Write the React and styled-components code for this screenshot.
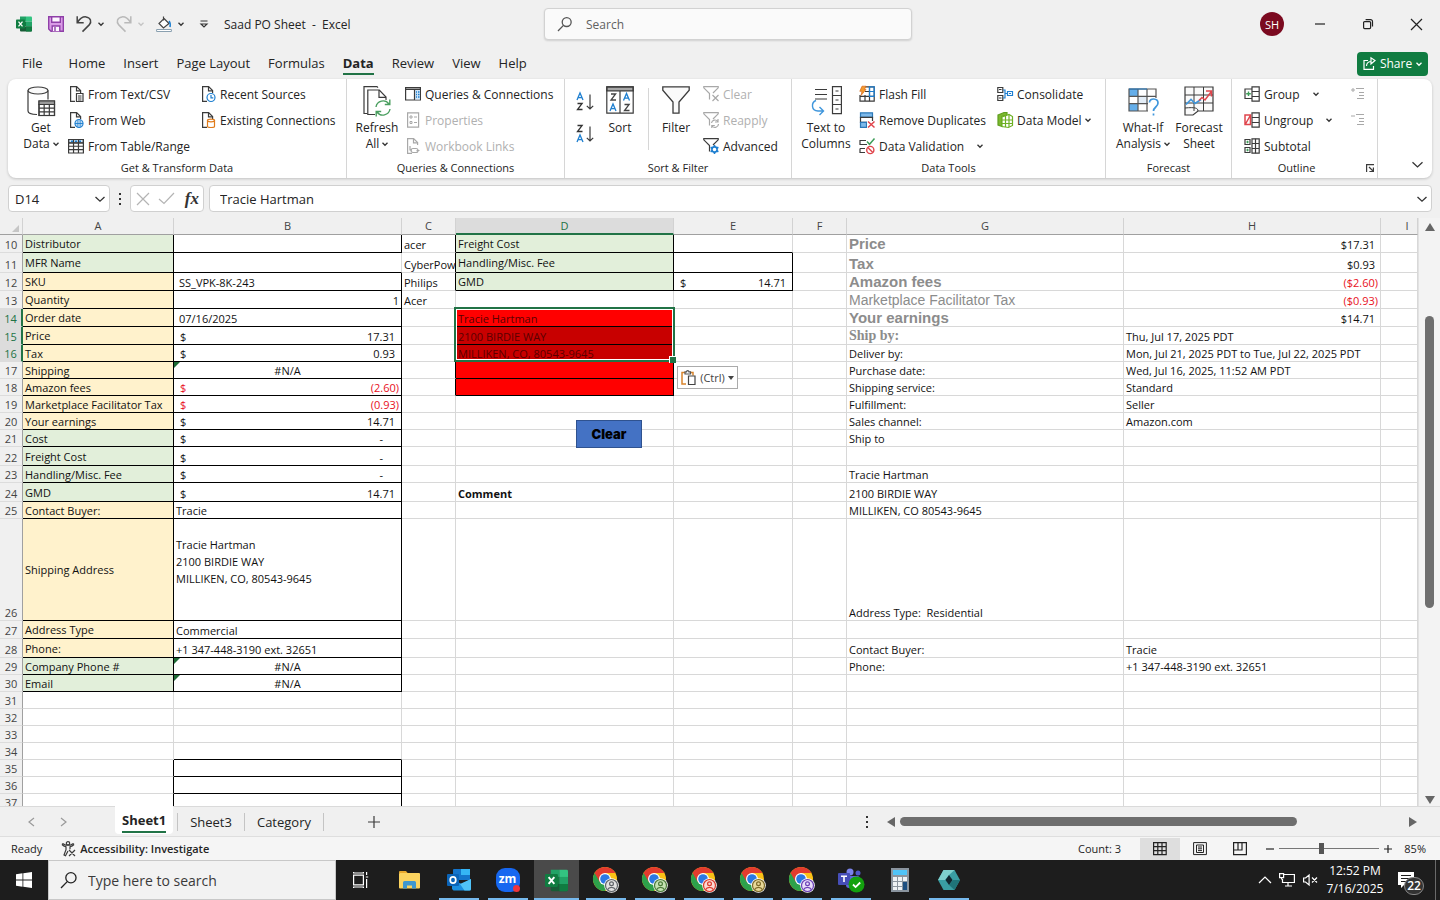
import React from 'react';
import styled, { createGlobalStyle, css } from 'styled-components';

const UI = '"Open Sans", "Noto Sans", sans-serif';
const GREEN = '#217346';

const GlobalStyle = createGlobalStyle`
  * { box-sizing: border-box; }
  html, body, #root { height: 100%; }
  body { margin: 0; background: #f0f0f0; font-family: ${UI}; color: #242424; overflow: hidden; }
  button, input { font-family: inherit; color: inherit; }
  button { border: 0; padding: 0; background: none; }
`;

const Window = styled.div`
  height: 100%;
  display: flex;
  flex-direction: column;
`;

const Svg = styled.svg`
  display: block;
  flex: none;
  overflow: visible;
`;

/* ---------- icons ---------- */

const Pic = ({ w = 16, h = 16, children, ...rest }) => (
  <Svg width={w} height={h} viewBox={`0 0 ${w} ${h}`} fill="none" stroke="#3b3b3b" strokeWidth="1.2" aria-hidden="true" {...rest}>
    {children}
  </Svg>
);

const Chevron = ({ color = '#333', size = 6, sw = 1.3 }) => (
  <Pic w={size} h={size} stroke={color} strokeWidth={sw}>
    <path d={`M0.5 ${size * 0.3} L${size / 2} ${size * 0.72} L${size - 0.5} ${size * 0.3}`} />
  </Pic>
);

const ExcelLogo = ({ s = 16 }) => (
  <Svg width={s} height={s} viewBox="0 0 32 32" aria-hidden="true">
    <path d="M8 1h12v10H8z" fill="#21a366" />
    <path d="M20 1h10a2 2 0 0 1 2 2v8H20z" fill="#33c481" />
    <path d="M8 11h12v10H8z" fill="#107c41" />
    <path d="M20 11h12v10H20z" fill="#21a366" />
    <path d="M8 21h24v8a2 2 0 0 1-2 2H10a2 2 0 0 1-2-2z" fill="#185c37" />
    <path d="M20 21h12v8a2 2 0 0 1-2 2H20z" fill="#107c41" />
    <rect x="0" y="7" width="18" height="18" rx="1.600" fill="#107c41" />
    <path d="M5 11.200l8 9.600M13 11.200l-8 9.600" stroke="#fff" strokeWidth="2.600" />
  </Svg>
);

const SaveIcon = () => (
  <Pic stroke="#8f3fa8" strokeWidth="1.4">
    <path d="M.7.7h14.6v14.6H3L.7 13z" fill="#d99be6" />
    <path d="M3.7.7h8.6v5.6H3.7zM4.2 15.3V10h7.6v5.3" fill="#fdf5ff" />
    <path d="M7 11v4" />
  </Pic>
);

const UndoIcon = () => (
  <Pic stroke="#444" strokeWidth="1.5">
    <path d="M1.200.2v6.500h6.500M1.400 6.500C4 2.500 7 .6 10 .9c4.800.6 6 5 3.200 8L6.500 15.600" />
  </Pic>
);

const RedoIcon = () => (
  <Pic stroke="#b9b9b9" strokeWidth="1.5">
    <path d="M14.800.2v6.500H8.300M14.600 6.500C12 2.500 9 .6 6 .9c-4.800.6-6 5-3.200 8l6.700 6.700" />
  </Pic>
);

const FillIcon = () => (
  <Pic>
    <path d="M7.500.5v4M8 2.500l5 5-5.500 4.500L3 7.500z" fill="#fff" stroke="#444" />
    <path d="M13 5c1 1 1.500 3 1 6" stroke="#1e7fd0" strokeWidth="1.600" />
    <path d="M.6 13.500h14.800v2H.6z" fill="#fff" stroke="#8aa0b0" strokeWidth="1" />
  </Pic>
);

const CustomizeIcon = () => (
  <Pic w={8} h={8} stroke="#333">
    <path d="M.5 1h7M1 4l3 3 3-3z" />
  </Pic>
);

const SearchIcon = ({ s = 16, color = '#555' }) => (
  <Pic w={s} h={s} stroke={color} strokeWidth="1.3">
    <circle cx={s * 0.62} cy={s * 0.36} r={s * 0.32} />
    <path d={`M${s * 0.39} ${s * 0.6} L0 ${s}`} />
  </Pic>
);

const Page = ({ stroke = '#3b3b3b' }) => (
  <>
    <path d="M7 15.400H2.600V.6h6l4 4v2.400" stroke={stroke} />
    <path d="M8.500.6v4.200h4.200" stroke={stroke} />
  </>
);

const MiniGrid = ({ x, y, w, h, cols, rows, color = '#3b3b3b' }) => {
  const lines = [];
  for (let c = 1; c < cols; c += 1) lines.push(`M${x + (w * c) / cols} ${y}v${h}`);
  for (let r = 1; r < rows; r += 1) lines.push(`M${x} ${y + (h * r) / rows}h${w}`);
  return <path d={`M${x} ${y}h${w}v${h}h${-w}z${lines.join('')}`} stroke={color} />;
};

const GetDataIcon = () => (
  <Pic w={28} h={30}>
    <ellipse cx="11" cy="4.500" rx="10" ry="3.500" fill="#fafafa" />
    <path d="M1 4.500v20.500c0 2 4 3.400 9 3.500M21 4.500v9" />
    <rect x="12" y="15" width="15.500" height="14.500" fill="#fff" />
    <path d="M12 15h15.500v3.500H12z" fill="#9a9a9a" />
    <MiniGrid x={12} y={18.5} w={15.5} h={11} cols={3} rows={3} />
  </Pic>
);

const TextCsvIcon = () => (
  <Pic>
    <Page />
    <path d="M8.500 7.500h6.500v8H8.500z" fill="#fff" />
    <path d="M10 10h3.500M10 12h3.500M10 14h3.500" strokeWidth="1" />
  </Pic>
);

const WebIcon = () => (
  <Pic>
    <Page />
    <circle cx="11" cy="11.500" r="4" fill="#fff" stroke="#1e7fd0" />
    <path d="M7 11.500h8M11 7.500v8M9.200 8v7M12.800 8v7" stroke="#1e7fd0" strokeWidth=".9" />
  </Pic>
);

const TableIcon = () => (
  <Pic>
    <path d="M.6 1.500h14.800v3.500H.6z" fill="#cfe5f8" />
    <MiniGrid x={0.6} y={1.5} w={14.8} h={13.5} cols={3} rows={4} />
    <path d="M3 3.200h2M7 3.200h2M11 3.200h2" stroke="#1e7fd0" strokeWidth="1.500" />
  </Pic>
);

const RecentIcon = () => (
  <Pic>
    <Page />
    <circle cx="11" cy="11.500" r="4" fill="#fff" stroke="#1e7fd0" />
    <path d="M11 9v2.800h2.300" stroke="#1e7fd0" />
  </Pic>
);

const ExistingIcon = () => (
  <Pic>
    <Page />
    <path d="M7.500 8.500v6c0 1.300 7 1.300 7 0v-6z" fill="#fff" stroke="#e07b1a" />
    <ellipse cx="11" cy="8.500" rx="3.500" ry="1.300" fill="#fff" stroke="#e07b1a" />
  </Pic>
);

const RefreshIcon = () => (
  <Pic w={28} h={30}>
    <path d="M4.500 27.500H1V.6h13l1 1" />
    <path d="M12 28.500H4.800V4h11.500L23 11v3" fill="#fff" />
    <path d="M16 4v7.300h7" />
    <circle cx="20" cy="22" r="8.500" fill="#fff" stroke="none" />
    <path d="M13 21a7.200 7.200 0 0 1 13-3M27 23a7.200 7.200 0 0 1-13 3M26.800 13.500v5h-5M13.200 30.500v-5h5" stroke="#4a9e5f" strokeWidth="1.400" />
  </Pic>
);

const QueriesIcon = () => (
  <Pic>
    <path d="M.6 1.500h14.800v12.500H.6z" fill="#fff" />
    <path d="M.6 1.500h14.800v2H.6z" fill="#999" />
    <path d="M10 4h5v9.500h-5z" fill="#cfe5f8" stroke="none" />
    <path d="M9.500 3.500v10.500" />
    <path d="M11 6h1M13 6h1.500M11 8.500h1M13 8.500h1.500M11 11h1M13 11h1.500" stroke="#1e7fd0" strokeWidth="1.300" />
  </Pic>
);

const PropertiesIcon = () => (
  <Pic stroke="#a8a8a8">
    <path d="M2.600.8h11v14.400h-11z" />
    <path d="M5 4h2v2H5zM5 9.500h2v2H5zM9 5h3M9 10.500h3" strokeWidth="1" />
  </Pic>
);

const LinksIcon = () => (
  <Pic stroke="#a8a8a8">
    <Page stroke="#a8a8a8" />
    <path d="M5 8v4h2M7.500 10.500h3.500a2 2 0 0 1 0 4H8a2 2 0 0 1 0-4M11.500 12.500h3" />
  </Pic>
);

const LetterA = ({ x, y, c }) => <path d={`M${x} ${y + 7}l3 -7l3 7M${x + 1} ${y + 4.6}h4`} stroke={c} strokeWidth="1.300" />;
const LetterZ = ({ x, y, c }) => <path d={`M${x + 0.5} ${y + 0.5}h4.600l-4.600 6h5`} stroke={c} strokeWidth="1.300" />;

const SortPairIcon = ({ desc }) => (
  <Pic w={17} h={18}>
    {desc ? <LetterZ x={0} y={0} c="#333" /> : <LetterA x={0} y={0} c="#1e7fd0" />}
    {desc ? <LetterA x={0} y={10} c="#1e7fd0" /> : <LetterZ x={0} y={10} c="#333" />}
    <path d="M13 1.500v14.500M9.800 12.800L13 16l3.200-3.200" />
  </Pic>
);

const SortIcon = () => (
  <Pic w={28} h={28}>
    <path d="M.8.8h26.400v4H.8z" fill="#a8a8a8" />
    <path d="M.8.8h26.400v26.400H.8zM14 5v22" />
    <LetterZ x={4.5} y={7.5} c="#444" />
    <LetterA x={17.5} y={7.5} c="#1e7fd0" />
    <LetterA x={4} y={18} c="#1e7fd0" />
    <LetterZ x={18} y={18} c="#444" />
  </Pic>
);

const FilterIcon = () => (
  <Pic w={28} h={28} strokeWidth="1.300">
    <path d="M.8.8h26.400v3.500L17 16v11.200h-6V16L.8 4.300z" fill="#fafafa" />
  </Pic>
);

const SmallFunnel = ({ color, children }) => (
  <Pic stroke={color}>
    <path d="M6.500 12V7.500L.8 1.800V.7h14.400v1.100L10 7M6.500 12v1.500" />
    {children}
  </Pic>
);

const ClearIcon = () => (
  <SmallFunnel color="#a8a8a8"><path d="M9.500 9l6 6M15.500 9l-6 6" /></SmallFunnel>
);
const ReapplyIcon = () => (
  <SmallFunnel color="#a8a8a8"><path d="M8.500 11a3.500 3.500 0 0 1 6.300-1.500M15.500 12a3.500 3.500 0 0 1-6.300 2M15 7v3h-3M8.800 16v-2.500h3" /></SmallFunnel>
);
const AdvancedIcon = () => (
  <SmallFunnel color="#3b3b3b">
    <circle cx="11.500" cy="11.500" r="2.600" stroke="#1e7fd0" strokeWidth="1.600" />
    <path d="M11.500 7v2M11.500 14v2M7.600 9.300l1.700 1M13.700 12.700l1.700 1M7.600 13.700l1.700-1M13.700 10.300l1.700-1" stroke="#1e7fd0" strokeWidth="1.600" />
  </SmallFunnel>
);

const TextColumnsIcon = () => (
  <Pic w={31} h={30}>
    <path d="M4 3.500h12M4 8.500h12M4 13h12" />
    <path d="M21.500.6h8.900v27h-8.900zM21.500 9.500h8.900M21.500 18.500h8.900M24.500 5h3M24.500 14h3M24.500 23h3" />
    <path d="M5 14.500c-5 2-5 10 2 10.500h5M8.500 21l4 4-4 4" stroke="#3f96dc" strokeWidth="1.400" />
  </Pic>
);

const FlashFillIcon = () => (
  <Pic>
    <path d="M6 .8h9.200v14.400H1V9" />
    <path d="M6 5.500h9M1 10.300h14M6 9v6M10.500.8v14.400" />
    <path d="M10.500.8h4.700v4.700h-4.700zM10.500 5.500h4.700v4.800h-4.700z" stroke="#1e7fd0" />
    <path d="M3 .2h4L5.500 3.500H7L2 9.500l1-4.200H.8z" fill="#f39a2d" stroke="#d8691a" strokeWidth=".7" />
  </Pic>
);

const RemoveDupIcon = () => (
  <Pic>
    <path d="M1.500.8h12v4.500h-12z" fill="#7db9ea" stroke="#2b78b8" />
    <path d="M1.500 5.300h12v5h-12z" />
    <path d="M1.500 10.300h6v5h-6z" fill="#7db9ea" stroke="#2b78b8" />
    <path d="M8 9h8v7H8z" fill="#fff" stroke="none" />
    <path d="M9 9.500l6.500 6M15.500 9.500l-6.500 6" stroke="#e0454c" strokeWidth="1.500" />
  </Pic>
);

const ValidationIcon = () => (
  <Pic>
    <path d="M7 2.500H1v4h7M1 10.500h5M1 10.500v4h5" />
    <path d="M8 3.500l2.500 2.800L15.500.5" stroke="#3f9e5a" strokeWidth="1.500" />
    <circle cx="11.300" cy="12" r="3.600" fill="#fff" stroke="#e0454c" strokeWidth="1.400" />
    <path d="M8.800 9.500l5 5" stroke="#e0454c" strokeWidth="1.400" />
  </Pic>
);

const ConsolidateIcon = () => (
  <Pic>
    <path d="M.8 1.500h5v5h-5zM.8 9.500h5v5h-5z" />
    <path d="M2 3.500h2.500M2 12h2.500" strokeWidth="1" />
    <path d="M10.500 5.500h5v4h-5z" stroke="#1e7fd0" />
    <path d="M6 4h2v8H6M8 7.500h2.500M12 7.500h2" stroke="#1e7fd0" />
  </Pic>
);

const DataModelIcon = () => (
  <Pic stroke="#5f9e1f">
    <path d="M1 3l6-2.500h3V3L5 4.500v10L1 13z" fill="#7cb82f" />
    <path d="M5 5l7-2.500 3.500 2v9l-4 2-6.500-1z" fill="#fff" stroke="#6eb024" />
    <path d="M8.500 4v11M12 3v12M5 8h10.500M5 11.500h10.500" stroke="#6eb024" />
  </Pic>
);

const WhatIfIcon = () => (
  <Pic w={31} h={30}>
    <path d="M1 3h9v7.500H1zM1 18h9v7H1z" fill="#64aeea" stroke="none" />
    <path d="M10 10.500h9V18h-9z" fill="#e3edf7" stroke="none" />
    <MiniGrid x={1} y={3} w={27} h={22} cols={3} rows={3} color="#555" />
    <path d="M1 3h18" stroke="#2b78b8" />
    <path d="M20 12h11v18H20z" fill="#fff" stroke="none" />
    <path d="M21.500 16.500c0-5 8.500-4.500 8.500.5 0 4-4.500 4-4.500 8M25.500 27.500v2" stroke="#3f96dc" strokeWidth="1.700" />
  </Pic>
);

const ForecastIcon = () => (
  <Pic w={30} h={30}>
    <path d="M1 1h28v24H14l-5 4H1z" fill="#fafafa" />
    <path d="M10 1v24M19.500 1v24M1 9h28M1 17h28M14 25c0-3-3-4-13-3" strokeWidth="1" />
    <path d="M2 18.500l5-5 4 4 6-4" stroke="#3f96dc" strokeWidth="1.700" />
    <path d="M15 14.500l3-3 3 2.500 6-8M22 5h5.500v5.500" stroke="#e0454c" strokeWidth="1.500" />
  </Pic>
);

const OutlineIcon = ({ kind }) => (
  <Pic>
    <path d="M8 .8h7.200v14.400H8zM8 5.500h7M8 10.500h7" />
    {kind === 'group' && <path d="M8 3H1v9.500h7" />}
    {kind === 'group' && <path d="M4.500 5.500v4.600M2.200 7.800h4.600" stroke="#3f9e5a" strokeWidth="1.400" />}
    {kind === 'ungroup' && <path d="M1 3h5.500v9.500H1zM1.500 12L6 4" stroke="#e0454c" strokeWidth="1.500" />}
    {kind === 'subtotal' && (
      <>
        <path d="M11.500.8v14.400M1 1.500h5v5H1zM1 9.500h5v5H1z" />
        <path d="M3.500 2.800v2.500M2.300 4h2.500M3.500 10.800v2.500M2.300 12h2.500" stroke="#3f9e5a" />
      </>
    )}
  </Pic>
);

const DetailIcon = ({ plus }) => (
  <Pic stroke="#a8a8a8">
    <path d={plus ? 'M3 2v4M1 4h4M6 2.500h8M9 6.500h5M9 9.500h5M7 12.500h7' : 'M1 4h4M6 2.500h8M9 6.500h5M9 9.500h5M7 12.500h7'} strokeWidth="1" />
  </Pic>
);

const ShareIcon = () => (
  <Pic w={13} h={13} stroke="#fff">
    <path d="M5 3.500H1v8.800h9.500V9M3.500 9c0-3 2-4.500 5-4.500M8 1.500v2.800M8 4.500V7l4-3.500L8 .8v1.500" />
  </Pic>
);

const PasteIcon = () => (
  <Pic w={16} h={17} stroke="#d8842c">
    <path d="M5 15H1V3.500h3M9 3.500h3v3" strokeWidth="1.500" />
    <path d="M4 5V2.800h1.500a1.200 1.200 0 0 1 2.400 0H9.500V5z" stroke="#555" fill="#fff" />
    <path d="M7.500 7h6.500v8.500H7.500z" stroke="#444" fill="#fff" />
  </Pic>
);

const AccessIcon = () => (
  <Pic>
    <circle cx="7" cy="2.300" r="1.700" />
    <path d="M1 3.500c2 2 3.500 2 4 2.200v3L3 14l1.500.8L7 10M13 3.500c-2 2-3.500 2-4 2.200v2.500M8 9l6 6M14 9l-6 6M1 3.500l1-.8 3 1.500h4l3-1.500 1 .8" />
  </Pic>
);

const DotsIcon = () => (
  <Pic w={3} h={12} fill="#333" stroke="none"><path d="M0 0h2v2H0zM0 5h2v2H0zM0 10h2v2H0z" /></Pic>
);

/* ---------- title bar ---------- */

const TitleBar = styled.header`
  height: 48px;
  flex: none;
  display: grid;
  grid-template-columns: 1fr 368px 1fr;
  align-items: center;
  padding-left: 16px;
`;

const QuickAccess = styled.div`
  display: flex;
  align-items: center;
  gap: 16px;
`;

const QuickPair = styled.button`
  display: flex;
  align-items: center;
  gap: 6px;
  margin-left: -4px;
`;

const DocTitle = styled.span`
  font-size: 12px;
  white-space: pre;
`;

const SearchBox = styled.label`
  height: 32px;
  display: flex;
  align-items: center;
  gap: 14px;
  padding: 0 13px;
  background: #fafafa;
  border: 1px solid #d2d2d2;
  border-radius: 4px;
  box-shadow: 0 1px 2px #0002;
`;

const PlainInput = styled.input`
  flex: 1;
  min-width: 0;
  border: 0;
  padding: 0;
  background: none;
  outline: 0;
  font-size: ${(p) => p.$size || 13}px;
  &::placeholder { color: ${(p) => p.$hint || '#616161'}; opacity: 1; }
`;

const WindowTools = styled.div`
  display: flex;
  justify-content: flex-end;
  align-items: center;
`;

const Avatar = styled.button`
  width: 24px;
  height: 24px;
  margin-right: 12px;
  border-radius: 50%;
  background: #7b0a20;
  color: #fff;
  font-size: 11px;
`;

const WindowButton = styled.button`
  width: 48px;
  height: 32px;
  display: grid;
  place-items: center;
`;

/* ---------- ribbon ---------- */

const TabBar = styled.nav`
  height: 31px;
  flex: none;
  display: flex;
  align-items: center;
  gap: 18px;
  padding: 0 12px 0 22px;
`;

const RibbonTab = styled.button`
  height: 22px;
  font-size: 13px;
  white-space: nowrap;
  border-bottom: 2px solid transparent;
  ${(p) => p.$wide && css`margin-right: 8px;`}
  ${(p) => p.$active && css`font-weight: 700; border-color: ${GREEN};`}
`;

const ShareButton = styled.button`
  margin-left: auto;
  height: 24px;
  width: 71px;
  display: flex;
  align-items: center;
  justify-content: center;
  gap: 4px;
  border-radius: 4px;
  background: #107c41;
  color: #fff;
  font-size: 12px;
`;

const Ribbon = styled.section`
  height: 99px;
  flex: none;
  margin: 0 8px;
  display: flex;
  background: #fff;
  border-radius: 8px;
  box-shadow: 0 1px 3px #0003;
  font-size: 12px;
`;

const Group = styled.div`
  width: ${(p) => p.$w}px;
  flex: none;
  display: flex;
  flex-direction: column;
  padding-top: 2px;
  border-right: 1px solid #d6d6d6;
  position: relative;
`;

const GroupBody = styled.div`
  height: 79px;
  display: flex;
  padding-left: ${(p) => p.$pad}px;
`;

const GroupLabel = styled.div`
  text-align: center;
  font-size: 11px;
  line-height: 16px;
  padding-right: ${(p) => (p.$launcher ? 16 : 0)}px;
`;

const Launcher = styled.button`
  position: absolute;
  right: 3px;
  bottom: 6px;
`;

const BigButton = styled.button`
  width: ${(p) => p.$w}px;
  flex: none;
  display: flex;
  flex-direction: column;
  align-items: center;
  gap: 3px;
  padding-top: 5px;
  font-size: 12px;
  line-height: 16px;
  white-space: nowrap;
`;

const IconSlot = styled.span`
  height: 31px;
`;

const WithChevron = styled.span`
  display: inline-flex;
  align-items: center;
  gap: 3px;
`;

const Column = styled.div`
  width: ${(p) => p.$w}px;
  flex: none;
  margin-left: ${(p) => p.$gap || 0}px;
`;

const SmallButton = styled.button`
  height: 26px;
  display: flex;
  align-items: center;
  gap: 4px;
  font-size: 12px;
  white-space: nowrap;
  color: ${(p) => (p.disabled ? '#b0b0b0' : '#242424')};
`;

const MenuMark = styled.span`
  margin-left: ${(p) => (p.$wide ? 9 : -1)}px;
`;

const SortStack = styled.div`
  display: flex;
  flex-direction: column;
  gap: 14px;
  padding-top: 12px;
  width: 22px;
`;

const InnerRule = styled.div`
  width: 1px;
  height: 62px;
  margin: 7px 0 0 7px;
  background: #d6d6d6;
`;

const Collapse = styled.button`
  margin: auto 9px 8px auto;
`;

/* ---------- formula bar ---------- */

const FormulaRow = styled.div`
  height: 40px;
  flex: none;
  display: flex;
  align-items: center;
  padding: 1px 8px 0;
`;

const Field = styled.div`
  height: 27px;
  display: flex;
  align-items: center;
  justify-content: space-between;
  width: ${(p) => (p.$w ? `${p.$w}px` : 'auto')};
  flex: ${(p) => (p.$w ? 'none' : '1')};
  margin-left: ${(p) => p.$ml || 0}px;
  padding: 0 4px 0 ${(p) => p.$pad || 4}px;
  background: #fff;
  border: 1px solid #d0d0d0;
  border-radius: 4px;
`;

const Grip = styled.span`
  width: 20px;
  display: grid;
  place-items: center;
`;

const Fx = styled.button`
  font: italic 700 17px/20px "Liberation Serif", serif;
  color: #333;
`;

/* ---------- sheet ---------- */

const SheetArea = styled.main`
  flex: 1;
  min-height: 0;
  display: flex;
`;

const GridPane = styled.div`
  flex: 1;
  min-width: 0;
  overflow: hidden;
`;

const Grid = styled.table`
  width: 100%;
  table-layout: fixed;
  border-spacing: 0;
  background: #fff;
  font: 11px/15px ${UI};
  color: #111;
`;

const ColHead = styled.th`
  height: 17px;
  padding: 0 0 0 ${(p) => (p.$last ? 16 : 0)}px;
  background: ${(p) => (p.$on ? '#dcdcdc' : '#f0f0f0')};
  color: ${(p) => (p.$on ? GREEN : '#444')};
  font-weight: 400;
  line-height: 14px;
  border-right: 1px solid #d2d2d2;
  border-bottom: ${(p) => (p.$on ? `2px solid ${GREEN}` : '1px solid #a0a0a0')};
`;

const Corner = styled.div`
  width: 0;
  margin: 5px 0 0 12px;
  border: solid transparent;
  border-width: 0 0 7px 7px;
  border-bottom-color: #c6c6c6;
`;

const RowHead = styled.th`
  padding: 0;
  background: ${(p) => (p.$on ? '#dcdcdc' : '#f0f0f0')};
  color: ${(p) => (p.$on ? GREEN : '#444')};
  font-weight: 400;
  line-height: 14px;
  vertical-align: bottom;
  border-right: ${(p) => (p.$on ? `2px solid ${GREEN}` : '1px solid #a0a0a0')};
  border-bottom: 1px solid #dcdcdc;
`;

const fills = { green: '#e2efda', yellow: '#fff2cc', red: '#ff0000', dark: '#c80000' };

const headings = {
  bold: css`font: 700 15px/16px "Liberation Sans", Arial, sans-serif;`,
  plain: css`font: 400 14px/16px "Liberation Sans", Arial, sans-serif;`,
  serif: css`font: 700 14px/16px "Liberation Serif", serif;`,
};

const Cell = styled.td`
  height: ${(p) => p.$h}px;
  padding: 0 2px;
  position: relative;
  white-space: pre;
  overflow: ${(p) => (p.$spill ? 'visible' : 'hidden')};
  vertical-align: ${(p) => p.$v || 'bottom'};
  text-align: ${(p) => p.$align || 'left'};
  background: ${(p) => fills[p.$fill] || '#fff'};
  color: ${(p) => p.$color || '#111'};
  font-weight: ${(p) => (p.$bold ? 700 : 400)};
  border-right: 1px solid ${(p) => (p.$r ? '#000' : '#d8d8d8')};
  border-bottom: 1px solid ${(p) => (p.$b ? '#000' : '#d8d8d8')};
  ${(p) => p.$indent && css`padding-left: 5px;`}
  ${(p) => p.$numeric && css`padding-right: 5px;`}
  ${(p) => p.$heading && css`
    ${headings[p.$heading]}
    color: #8c8c8c;
    vertical-align: bottom;
  `}
`;

const Accounting = styled.div`
  display: flex;
  justify-content: space-between;
  padding: 0 ${(p) => (p.$neg ? 0 : 4)}px 0 4px;
  color: ${(p) => (p.$neg ? '#e8101c' : 'inherit')};
`;

const Dash = styled.span`
  padding-right: 12px;
`;

const ErrorMark = styled.i`
  position: absolute;
  top: 0;
  left: 0;
  border: 0 solid transparent;
  border-width: 6px 6px 0 0;
  border-top-color: #1d6b35;
`;

const Address = styled.div`
  line-height: 17px;
`;

const Selection = styled.div`
  position: absolute;
  z-index: 2;
  top: -2px;
  left: -2px;
  right: -2px;
  height: 55px;
  border: 2px solid ${GREEN};
  box-shadow: inset 0 0 0 1px #fff;
  pointer-events: none;
  &::after {
    content: '';
    position: absolute;
    right: -3px;
    bottom: -3px;
    width: 6px;
    height: 6px;
    background: ${GREEN};
    border: solid #fff;
    border-width: 1px 0 0 1px;
  }
`;

const ClearShape = styled.button`
  position: absolute;
  z-index: 2;
  top: 7px;
  right: 31px;
  width: 66px;
  height: 28px;
  background: #4472c4;
  border: 1px solid #2f528f;
  color: #000;
  font-family: Inter, "Liberation Sans", sans-serif;
  font-weight: 900;
  font-size: 13px;
`;

const PasteOptions = styled.button`
  position: absolute;
  z-index: 2;
  top: 4px;
  left: 3px;
  width: 61px;
  height: 23px;
  display: flex;
  align-items: center;
  justify-content: center;
  gap: 3px;
  background: #fff;
  border: 1px solid #ababab;
  color: #444;
  font-size: 11px;
`;

const Triangle = styled.span`
  border: ${(p) => p.$s || 5}px solid transparent;
  ${(p) => p.$dir === 'up' && css`border-top: 0; border-bottom: ${p.$len || 8}px solid ${p.$c || '#666'};`}
  ${(p) => p.$dir === 'down' && css`border-bottom: 0; border-top: ${p.$len || 8}px solid ${p.$c || '#666'};`}
  ${(p) => p.$dir === 'left' && css`border-left: 0; border-right: ${p.$len || 8}px solid ${p.$c || '#666'};`}
  ${(p) => p.$dir === 'right' && css`border-right: 0; border-left: ${p.$len || 8}px solid ${p.$c || '#666'};`}
`;

const VScroll = styled.div`
  width: 22px;
  flex: none;
  display: flex;
  flex-direction: column;
  align-items: center;
  padding: 5px 0 2px;
  background: #f3f3f3;
  border-left: 1px solid #e2e2e2;
`;

const VTrack = styled.div`
  flex: 1;
  display: grid;
  grid-template-rows: 85fr 291fr 187fr;
`;

const VThumb = styled.div`
  grid-row: 2;
  width: 9px;
  border-radius: 5px;
  background: #6e6e6e;
`;

/* ---------- sheet tabs and status ---------- */

const SheetBar = styled.div`
  height: 31px;
  flex: none;
  display: flex;
  align-items: center;
  border-top: 1px solid #dadada;
  border-bottom: 1px solid #dedede;
`;

const SheetNav = styled.div`
  width: 115px;
  display: flex;
  gap: 25px;
  padding-left: 27px;
`;

const SheetTab = styled.button`
  height: 20px;
  margin: 0 12px;
  font-size: 13px;
  line-height: 18px;
`;

const ActiveTab = styled.div`
  align-self: flex-start;
  height: 28px;
  margin-top: -1px;
  padding: 2px 7px 0;
  background: #fff;
  border-radius: 0 0 4px 4px;
  button {
    height: 23px;
    font-size: 13px;
    line-height: 18px;
    font-weight: 700;
    border-bottom: 2px solid ${GREEN};
  }
`;

const TabRule = styled.i`
  width: 1px;
  height: 18px;
  background: #c4c4c4;
  margin-left: ${(p) => p.$ml || 0}px;
`;

const AddSheet = styled.button`
  margin-left: 44px;
`;

const HScroll = styled.div`
  width: 530px;
  margin: 0 23px 0 18px;
  display: flex;
  align-items: center;
  gap: 5px;
`;

const HTrack = styled.div`
  flex: 1;
  display: grid;
  grid-template-columns: 397fr 107fr;
`;

const HThumb = styled.div`
  height: 9px;
  border-radius: 5px;
  background: #6e6e6e;
`;

const StatusBar = styled.footer`
  height: 23px;
  flex: none;
  display: flex;
  align-items: center;
  padding: 0 14px 0 11px;
  background: #f5f5f5;
  font-size: 11px;
`;

const AccessButton = styled.button`
  display: flex;
  align-items: center;
  gap: 3px;
  margin-left: 19px;
  font-size: 11px;
  font-weight: 600;
`;

const CountText = styled.span`
  margin-right: 19px;
`;

const ViewButton = styled.button`
  width: 40px;
  height: 22px;
  display: grid;
  place-items: center;
  background: ${(p) => (p.$on ? '#dedede' : 'none')};
`;

const ZoomStep = styled.button`
  margin-left: ${(p) => p.$ml || 0}px;
`;

const ZoomRange = styled.input`
  width: 100px;
  height: 16px;
  margin: 0 5px;
  appearance: none;
  background: linear-gradient(#777, #777) center / 100% 1px no-repeat;
  &::-webkit-slider-thumb {
    appearance: none;
    width: 5px;
    height: 11px;
    background: #555;
  }
`;

const ZoomValue = styled.span`
  width: 26px;
  margin-left: 8px;
  text-align: right;
`;

const Spacer = styled.span`
  flex: 1;
`;

/* ---------- taskbar ---------- */

const Taskbar = styled.div`
  height: 40px;
  flex: none;
  display: flex;
  background: #1d1d1d;
  color: #fff;
`;

const StartButton = styled.button`
  width: 48px;
  display: grid;
  place-items: center;
`;

const TaskSearch = styled.label`
  width: 288px;
  display: flex;
  align-items: center;
  gap: 11px;
  padding: 0 12px;
  background: #f2f2f2;
  border: 1px solid #c8c8c8;
  color: #222;
`;

const TaskItem = styled.button`
  width: 49px;
  display: grid;
  place-items: center;
  ${(p) => p.$open && css`
    background: linear-gradient(#76b9ed, #76b9ed) center bottom / 40px 2px no-repeat;
  `}
  ${(p) => p.$active && css`
    background:
      linear-gradient(#76b9ed, #76b9ed) center bottom / 45px 2px no-repeat,
      linear-gradient(#4a4a4a, #4a4a4a) center / 45px 100% no-repeat;
  `}
`;

const Tray = styled.div`
  margin-left: auto;
  display: flex;
  align-items: center;
  gap: 8px;
  padding-right: 11px;
`;

const ShowDesktop = styled.button`
  width: 5px;
  border-left: 1px solid #6a6a6a;
`;

const Clock = styled.div`
  width: 58px;
  text-align: center;
  font-size: 12px;
  line-height: 18px;
`;

const Notify = styled.button`
  position: relative;
  width: 26px;
  height: 26px;
  margin-left: 6px;
`;

const Badge = styled.span`
  position: absolute;
  left: 6px;
  top: 10px;
  width: 20px;
  height: 18px;
  border-radius: 9px;
  border: 1px solid #888;
  background: #333;
  color: #fff;
  font-size: 12px;
  font-weight: 600;
  line-height: 16px;
`;

const WindowsLogo = () => (
  <Svg width="16" height="16" viewBox="0 0 16 16" fill="#fff" aria-hidden="true">
    <path d="M0 2.200l6.500-.9v6.300H0zM7.300 1.200L16 0v7.600H7.300zM0 8.400h6.500v6.300L0 13.800zM7.300 8.400H16V16l-8.700-1.200z" />
  </Svg>
);

const TaskViewIcon = () => (
  <Pic stroke="#fff">
    <path d="M.6 3.200h9.800v9.600H.6zM.6 0v1h9.800V0M.6 16v-1h9.800v1M13.600 0v3M13.600 7v9M12.800 5h2.400" />
  </Pic>
);

const ExplorerIcon = () => (
  <Svg width="22" height="18" viewBox="0 0 22 18" aria-hidden="true">
    <path d="M0 1a1 1 0 0 1 1-1h6l2 2.500H0z" fill="#e8a82c" />
    <rect y="2" width="21" height="15.500" rx="1" fill="#fbd35f" />
    <path d="M4 17.500v-6a1.500 1.500 0 0 1 1.500-1.500h10a1.500 1.500 0 0 1 1.500 1.500v6h-4v-3H8v3z" fill="#3f97cf" />
  </Svg>
);

const OutlookIcon = () => (
  <Svg width="24" height="22" viewBox="0 0 24 22" aria-hidden="true">
    <path d="M7 0h15a1 1 0 0 1 1 1v10H6V1a1 1 0 0 1 1-1z" fill="#1475cc" />
    <path d="M14 0h9v6h-9z" fill="#35b5f5" />
    <path d="M5 10l9.500 5L24 10v10a1.500 1.500 0 0 1-1.500 1.500H6.500L5 20z" fill="#1a8fe0" />
    <path d="M24 10v10a1.500 1.500 0 0 1-1.500 1.500h-5L13 15z" fill="#50c3f7" />
    <rect x="0" y="5" width="12" height="12" rx="1" fill="#0a64b8" />
    <ellipse cx="6" cy="11" rx="2.800" ry="3.100" fill="none" stroke="#fff" strokeWidth="1.700" />
  </Svg>
);

const ZoomLogo = styled.span`
  position: relative;
  width: 24px;
  height: 24px;
  border-radius: 9px;
  background: #1767f0;
  font-size: 12px;
  font-weight: 700;
  line-height: 21px;
  text-align: center;
  &::after {
    content: '';
    position: absolute;
    right: 0;
    bottom: 0;
    width: 7px;
    height: 7px;
    border-radius: 50%;
    background: #f0363d;
  }
`;

const ChromeIcon = ({ badge }) => (
  <Svg width="26" height="26" viewBox="0 0 26 26" aria-hidden="true">
    <circle cx="12" cy="12" r="12" fill="#fbc116" />
    <path d="M12 12L1.600 6A12 12 0 0 0 12 24l5.200-9z" fill="#2da14b" />
    <path d="M12 6h10.400A12 12 0 0 0 1.600 6l5.200 9z" fill="#e33b2e" />
    <circle cx="12" cy="12" r="6" fill="#fff" />
    <circle cx="12" cy="12" r="4.800" fill="#2b78e4" />
    <circle cx="18.500" cy="18.500" r="7.300" fill="#fff" />
    <circle cx="18.500" cy="18.500" r="6" fill={badge.fill} stroke={badge.ink} strokeWidth="1.200" />
    <circle cx="18.500" cy="16.800" r="1.900" fill="none" stroke={badge.ink} strokeWidth="1.200" />
    <path d="M14.800 22.500c1-2.800 6.400-2.800 7.400 0" fill="none" stroke={badge.ink} strokeWidth="1.200" />
  </Svg>
);

const TeamsIcon = () => (
  <Svg width="26" height="26" viewBox="0 0 26 26" aria-hidden="true">
    <circle cx="12" cy="5" r="3.500" fill="#7b83eb" />
    <circle cx="20" cy="6" r="2.500" fill="#5059c9" />
    <rect x="8" y="9" width="14" height="12" rx="3" fill="#5f68d8" />
    <rect x="0" y="6" width="12" height="12" rx="1" fill="#464eb8" />
    <path d="M3 9.300h6M6 9.300V15" stroke="#fff" strokeWidth="1.600" />
    <circle cx="18.500" cy="17.500" r="8" fill="#13a10e" />
    <path d="M15 17.500l2.600 2.600 4.600-4.600" fill="none" stroke="#fff" strokeWidth="1.800" />
  </Svg>
);

const CalcIcon = () => (
  <Svg width="18" height="24" viewBox="0 0 18 24" aria-hidden="true">
    <rect width="18" height="24" fill="#8a949e" />
    <rect x="2" y="2" width="14" height="5" fill="#4fc3f7" />
    <path d="M2 9h4v4H2zM7 9h4v4H7zM12 9h4v4h-4zM2 14h4v4H2zM7 14h4v4H7zM2 19h4v3H2zM7 19h4v3H7z" fill="#eef2f5" />
    <path d="M12 14h4v8h-4z" fill="#1c4e80" />
  </Svg>
);

const HexIcon = () => (
  <Svg width="22" height="20" viewBox="0 0 22 20" aria-hidden="true">
    <path d="M5.500 0h11L22 10l-5.500 10h-11L0 10z" fill="#3a9ea3" />
    <path d="M5.500 0h11L11 5l-4 5H0z" fill="#7fd0cd" />
    <path d="M16.500 20L22 10h-7l-4 5z" fill="#1f7479" />
    <path d="M11 5l3.500 5-3.500 5-3.500-5z" fill="#12262e" />
  </Svg>
);

/* ---------- data ---------- */

const ribbonTabs = ['File', 'Home', 'Insert', 'Page Layout', 'Formulas', 'Data', 'Review', 'View', 'Help'];

const columns = [
  ['A', 151], ['B', 228], ['C', 54], ['D', 218], ['E', 119], ['F', 54], ['G', 277], ['H', 257], ['I', null],
];

const na = { error: true };
const money = (value) => ({ money: value });

const rows = [
  { n: 10, h: 18, a: 'Distributor', tone: 'green', b: '', c: 'acer', d: 'Freight Cost', g: 'Price', head: 'bold', hv: '$17.31' },
  { n: 11, h: 20, a: 'MFR Name', tone: 'green', b: '', c: 'CyberPow', d: 'Handling/Misc. Fee', g: 'Tax', head: 'bold', hv: '$0.93' },
  { n: 12, h: 18, a: 'SKU', tone: 'yellow', b: 'SS_VPK-8K-243', indent: true, c: 'Philips', d: 'GMD', e: money('14.71'), g: 'Amazon fees', head: 'bold', hv: '($2.60)' },
  { n: 13, h: 18, a: 'Quantity', tone: 'yellow', b: '1', alignB: 'right', c: 'Acer', g: 'Marketplace Facilitator Tax', head: 'plain', hv: '($0.93)' },
  { n: 14, h: 18, a: 'Order date', tone: 'yellow', b: '07/16/2025', indent: true, d: 'Tracie Hartman', g: 'Your earnings', head: 'bold', hv: '$14.71' },
  { n: 15, h: 18, a: 'Price', tone: 'yellow', b: money('17.31'), d: '2100 BIRDIE WAY', g: 'Ship by:', head: 'serif', hl: 'Thu, Jul 17, 2025 PDT' },
  { n: 16, h: 17, a: 'Tax', tone: 'yellow', b: money('0.93'), d: 'MILLIKEN, CO, 80543-9645', g: 'Deliver by:', hl: 'Mon, Jul 21, 2025 PDT to Tue, Jul 22, 2025 PDT' },
  { n: 17, h: 17, a: 'Shipping', tone: 'yellow', b: na, g: 'Purchase date:', hl: 'Wed, Jul 16, 2025, 11:52 AM PDT' },
  { n: 18, h: 17, a: 'Amazon fees', tone: 'yellow', b: money('(2.60)'), g: 'Shipping service:', hl: 'Standard' },
  { n: 19, h: 17, a: 'Marketplace Facilitator Tax', tone: 'yellow', b: money('(0.93)'), g: 'Fulfillment:', hl: 'Seller' },
  { n: 20, h: 17, a: 'Your earnings', tone: 'yellow', b: money('14.71'), g: 'Sales channel:', hl: 'Amazon.com' },
  { n: 21, h: 17, a: 'Cost', tone: 'green', b: money('-'), g: 'Ship to' },
  { n: 22, h: 19, a: 'Freight Cost', tone: 'green', b: money('-') },
  { n: 23, h: 17, a: 'Handling/Misc. Fee', tone: 'green', b: money('-'), g: 'Tracie Hartman' },
  { n: 24, h: 19, a: 'GMD', tone: 'green', b: money('14.71'), d: 'Comment', g: '2100 BIRDIE WAY' },
  { n: 25, h: 17, a: 'Contact Buyer:', tone: 'yellow', b: 'Tracie', g: 'MILLIKEN, CO 80543-9645' },
  { n: 26, h: 102, a: 'Shipping Address', tone: 'yellow', address: true, b: 'Tracie Hartman\n2100 BIRDIE WAY\nMILLIKEN, CO, 80543-9645\n ', g: 'Address Type:  Residential' },
  { n: 27, h: 18, a: 'Address Type', tone: 'yellow', b: 'Commercial' },
  { n: 28, h: 19, a: 'Phone:', tone: 'yellow', b: '+1 347-448-3190 ext. 32651', g: 'Contact Buyer:', hl: 'Tracie' },
  { n: 29, h: 17, a: 'Company Phone #', tone: 'green', b: na, g: 'Phone:', hl: '+1 347-448-3190 ext. 32651' },
  { n: 30, h: 17, a: 'Email', tone: 'green', b: na },
  { n: 31, h: 17 }, { n: 32, h: 17 }, { n: 33, h: 17 }, { n: 34, h: 17 },
  { n: 35, h: 17, boxed: true }, { n: 36, h: 17, boxed: true }, { n: 37, h: 17, boxed: true },
];

const Value = ({ v, address }) => {
  if (v == null) return null;
  if (v.error) return <><ErrorMark />#N/A</>;
  if (v.money) {
    return (
      <Accounting $neg={v.money.startsWith('(')}>
        <span>$</span>
        {v.money === '-' ? <Dash>-</Dash> : <span>{v.money}</span>}
      </Accounting>
    );
  }
  return address ? <Address>{v}</Address> : v;
};

const redFill = (n) => {
  if (n === 15 || n === 16) return 'dark';
  return n >= 14 && n <= 18 ? 'red' : undefined;
};

const SheetRow = ({ row }) => {
  const { n, h } = row;
  const labelled = n <= 30;
  const selected = n >= 14 && n <= 16;
  const dFill = n <= 12 ? 'green' : redFill(n);
  const outlined = labelled || row.boxed;
  return (
    <tr>
      <RowHead scope="row" $on={selected}>{n}</RowHead>
      <Cell $h={h} $v="middle" $fill={row.tone} $r={outlined} $b={labelled}>{row.a}</Cell>
      <Cell
        $h={h}
        $r={outlined && n !== 11}
        $b={outlined || n === 34}
        $indent={row.indent}
        $align={row.b && row.b.error ? 'center' : row.alignB}
        $v={row.address ? 'middle' : 'bottom'}
      >
        <Value v={row.b} address={row.address} />
      </Cell>
      <Cell $h={h} $r={n <= 12 || redFill(n)} $spill={n === 11}>{row.c}</Cell>
      <Cell
        $h={h}
        $fill={dFill}
        $r={dFill}
        $b={dFill}
        $v={n <= 12 ? 'middle' : 'bottom'}
        $spill={n === 14 || n === 20}
        $bold={n === 24}
        $color={redFill(n) && '#5a0000'}
      >
        {row.d}
        {n === 14 && <Selection />}
        {n === 20 && <ClearShape type="button">Clear</ClearShape>}
      </Cell>
      <Cell $h={h} $r={n === 11 || n === 12} $b={n <= 12} $spill={n === 17}>
        <Value v={row.e} />
        {n === 17 && (
          <PasteOptions type="button">
            <PasteIcon />(Ctrl)<Triangle $dir="down" $s={3} $len={4} $c="#444" />
          </PasteOptions>
        )}
      </Cell>
      <Cell $h={h} />
      <Cell $h={h} $heading={row.head}>{row.g}</Cell>
      <Cell
        $h={h}
        $align={row.hv ? 'right' : 'left'}
        $numeric={row.hv && !row.hv.startsWith('(')}
        $color={row.hv && row.hv.startsWith('(') ? '#e8101c' : undefined}
      >
        {row.hv || row.hl}
      </Cell>
      <Cell $h={h} />
    </tr>
  );
};

const Small = ({ icon, children, menu, wide, disabled }) => (
  <SmallButton type="button" disabled={disabled}>
    {icon}
    <span>{children}</span>
    {menu && <MenuMark $wide={wide}><Chevron /></MenuMark>}
  </SmallButton>
);

const Big = ({ icon, lines, menu, w }) => (
  <BigButton type="button" $w={w}>
    <IconSlot>{icon}</IconSlot>
    <span>
      {lines[0]}
      {lines[1] && <br />}
      {lines[1] && <WithChevron>{lines[1]}{menu && <Chevron />}</WithChevron>}
    </span>
  </BigButton>
);

const DataRibbon = () => (
  <Ribbon aria-label="Data">
    <Group $w={339}>
      <GroupBody $pad={9}>
        <Big w={48} icon={<GetDataIcon />} lines={['Get', 'Data']} menu />
        <Column $w={132} $gap={3}>
          <Small icon={<TextCsvIcon />}>From Text/CSV</Small>
          <Small icon={<WebIcon />}>From Web</Small>
          <Small icon={<TableIcon />}>From Table/Range</Small>
        </Column>
        <Column $w={140}>
          <Small icon={<RecentIcon />}>Recent Sources</Small>
          <Small icon={<ExistingIcon />}>Existing Connections</Small>
        </Column>
      </GroupBody>
      <GroupLabel>Get &amp; Transform Data</GroupLabel>
    </Group>
    <Group $w={218}>
      <GroupBody $pad={6}>
        <Big w={48} icon={<RefreshIcon />} lines={['Refresh', 'All']} menu />
        <Column $w={150} $gap={4}>
          <Small icon={<QueriesIcon />}>Queries &amp; Connections</Small>
          <Small icon={<PropertiesIcon />} disabled>Properties</Small>
          <Small icon={<LinksIcon />} disabled>Workbook Links</Small>
        </Column>
      </GroupBody>
      <GroupLabel>Queries &amp; Connections</GroupLabel>
    </Group>
    <Group $w={227}>
      <GroupBody $pad={12}>
        <SortStack>
          <button type="button" aria-label="Sort A to Z"><SortPairIcon /></button>
          <button type="button" aria-label="Sort Z to A"><SortPairIcon desc /></button>
        </SortStack>
        <Big w={42} icon={<SortIcon />} lines={['Sort']} />
        <InnerRule />
        <Big w={54} icon={<FilterIcon />} lines={['Filter']} />
        <Column $w={85}>
          <Small icon={<ClearIcon />} disabled>Clear</Small>
          <Small icon={<ReapplyIcon />} disabled>Reapply</Small>
          <Small icon={<AdvancedIcon />}>Advanced</Small>
        </Column>
      </GroupBody>
      <GroupLabel>Sort &amp; Filter</GroupLabel>
    </Group>
    <Group $w={314}>
      <GroupBody $pad={6}>
        <Big w={56} icon={<TextColumnsIcon />} lines={['Text to', 'Columns']} />
        <Column $w={138} $gap={5}>
          <Small icon={<FlashFillIcon />}>Flash Fill</Small>
          <Small icon={<RemoveDupIcon />}>Remove Duplicates</Small>
          <Small icon={<ValidationIcon />} menu wide>Data Validation</Small>
        </Column>
        <Column $w={100}>
          <Small icon={<ConsolidateIcon />}>Consolidate</Small>
          <Small icon={<DataModelIcon />} menu>Data Model</Small>
        </Column>
      </GroupBody>
      <GroupLabel>Data Tools</GroupLabel>
    </Group>
    <Group $w={126}>
      <GroupBody $pad={9}>
        <Big w={56} icon={<WhatIfIcon />} lines={['What-If', 'Analysis']} menu />
        <Big w={56} icon={<ForecastIcon />} lines={['Forecast', 'Sheet']} />
      </GroupBody>
      <GroupLabel>Forecast</GroupLabel>
    </Group>
    <Group $w={146}>
      <GroupBody $pad={12}>
        <Column $w={106}>
          <Small icon={<OutlineIcon kind="group" />} menu wide>Group</Small>
          <Small icon={<OutlineIcon kind="ungroup" />} menu wide>Ungroup</Small>
          <Small icon={<OutlineIcon kind="subtotal" />}>Subtotal</Small>
        </Column>
        <Column $w={18}>
          <SmallButton type="button" disabled aria-label="Show Detail"><DetailIcon plus /></SmallButton>
          <SmallButton type="button" disabled aria-label="Hide Detail"><DetailIcon /></SmallButton>
        </Column>
      </GroupBody>
      <GroupLabel $launcher>Outline</GroupLabel>
      <Launcher type="button" aria-label="Outline settings">
        <Pic w={8} h={8}><path d="M.6 8V.6H8M3 3l4 4M7.400 3.500v4h-4" /></Pic>
      </Launcher>
    </Group>
    <Collapse type="button" aria-label="Collapse ribbon"><Chevron size={11} /></Collapse>
  </Ribbon>
);

const chromeBadges = [
  { fill: '#e3e3e3', ink: '#5f6368' },
  { fill: '#c5e3b4', ink: '#4c7a3a' },
  { fill: '#fbd9d3', ink: '#d93a2b' },
  { fill: '#e8d99a', ink: '#7d6a28' },
  { fill: '#e9dcfa', ink: '#6a3fb5' },
];

export default function App() {
  return (
    <Window>
      <GlobalStyle />
      <TitleBar>
        <QuickAccess>
          <ExcelLogo />
          <button type="button" aria-label="Save"><SaveIcon /></button>
          <QuickPair type="button" aria-label="Undo"><UndoIcon /><Chevron /></QuickPair>
          <QuickPair type="button" aria-label="Redo"><RedoIcon /><Chevron color="#c4c4c4" /></QuickPair>
          <QuickPair type="button" aria-label="Fill color"><FillIcon /><Chevron /></QuickPair>
          <button type="button" aria-label="Customize toolbar"><CustomizeIcon /></button>
          <DocTitle>Saad PO Sheet  -  Excel</DocTitle>
        </QuickAccess>
        <SearchBox>
          <SearchIcon s={14} />
          <PlainInput placeholder="Search" aria-label="Search" $size={12} />
        </SearchBox>
        <WindowTools>
          <Avatar type="button">SH</Avatar>
          <WindowButton type="button" aria-label="Minimize"><Pic w={10} h={10}><path d="M0 5h10" stroke="#222" /></Pic></WindowButton>
          <WindowButton type="button" aria-label="Restore">
            <Pic w={10} h={10} stroke="#222"><rect x=".6" y="2.600" width="7" height="7" rx="1" /><path d="M2.600.6H7.500a2 2 0 0 1 2 2v5" /></Pic>
          </WindowButton>
          <WindowButton type="button" aria-label="Close"><Pic w={11} h={11}><path d="M0 0l11 11M11 0L0 11" stroke="#222" /></Pic></WindowButton>
        </WindowTools>
      </TitleBar>

      <TabBar>
        {ribbonTabs.map((t) => (
          <RibbonTab key={t} type="button" $active={t === 'Data'} $wide={t === 'File'}>{t}</RibbonTab>
        ))}
        <ShareButton type="button"><ShareIcon />Share<Chevron color="#fff" /></ShareButton>
      </TabBar>

      <DataRibbon />

      <FormulaRow>
        <Field $w={102} $pad={6}>
          <PlainInput defaultValue="D14" aria-label="Name box" />
          <Chevron size={10} />
        </Field>
        <Grip><DotsIcon /></Grip>
        <Field $w={74} $pad={6}>
          <button type="button" aria-label="Cancel"><Pic w={12} h={12} stroke="#b4b4b4"><path d="M0 0l12 12M12 0L0 12" /></Pic></button>
          <button type="button" aria-label="Enter"><Pic w={15} h={11} stroke="#b4b4b4"><path d="M0 6l5 4.500L15 0" /></Pic></button>
          <Fx type="button" aria-label="Insert function">fx</Fx>
        </Field>
        <Field $ml={5} $pad={10}>
          <PlainInput defaultValue="Tracie Hartman" aria-label="Formula bar" />
          <Chevron size={10} />
        </Field>
      </FormulaRow>

      <SheetArea>
        <GridPane>
          <Grid>
            <colgroup>
              <col width="23" />
              {columns.map(([name, w]) => <col key={name} width={w || undefined} />)}
            </colgroup>
            <thead>
              <tr>
                <ColHead><Corner /></ColHead>
                {columns.map(([name]) => (
                  <ColHead key={name} scope="col" $on={name === 'D'} $last={name === 'I'}>{name}</ColHead>
                ))}
              </tr>
            </thead>
            <tbody>
              {rows.map((row) => <SheetRow key={row.n} row={row} />)}
            </tbody>
          </Grid>
        </GridPane>
        <VScroll>
          <Triangle $dir="up" />
          <VTrack><VThumb /></VTrack>
          <Triangle $dir="down" />
        </VScroll>
      </SheetArea>

      <SheetBar>
        <SheetNav>
          <button type="button" aria-label="Previous sheet"><Pic w={8} h={10} stroke="#999"><path d="M7 1L2 5l5 4" /></Pic></button>
          <button type="button" aria-label="Next sheet"><Pic w={8} h={10} stroke="#999"><path d="M1 1l5 4-5 4" /></Pic></button>
        </SheetNav>
        <ActiveTab><button type="button">Sheet1</button></ActiveTab>
        <TabRule $ml={4} />
        <SheetTab type="button">Sheet3</SheetTab>
        <TabRule />
        <SheetTab type="button">Category</SheetTab>
        <TabRule />
        <AddSheet type="button" aria-label="New sheet"><Pic w={12} h={12}><path d="M6 0v12M0 6h12" /></Pic></AddSheet>
        <Spacer />
        <DotsIcon />
        <HScroll>
          <Triangle $dir="left" />
          <HTrack><HThumb /></HTrack>
          <Triangle $dir="right" />
        </HScroll>
      </SheetBar>

      <StatusBar>
        <span>Ready</span>
        <AccessButton type="button"><AccessIcon />Accessibility: Investigate</AccessButton>
        <Spacer />
        <CountText>Count: 3</CountText>
        <ViewButton type="button" $on aria-label="Normal view"><Pic w={14} h={13}><MiniGrid x={0.6} y={0.6} w={12.6} h={12} cols={3} rows={3} color="#222" /></Pic></ViewButton>
        <ViewButton type="button" aria-label="Page layout view"><Pic w={14} h={13} stroke="#222"><path d="M.6.6h12.800v12H.6zM3.500 3h7v7.500h-7zM5 5h4M5 6.800h4M5 8.600h4" strokeWidth="1" /></Pic></ViewButton>
        <ViewButton type="button" aria-label="Page break view"><Pic w={14} h={13} stroke="#222"><path d="M.6.6h12.800v12H.6zM5 .6V8H.6M5 8h4V.6" /></Pic></ViewButton>
        <ZoomStep type="button" $ml={6} aria-label="Zoom out"><Pic w={8} h={8} stroke="#222"><path d="M0 4h8" /></Pic></ZoomStep>
        <ZoomRange type="range" min="0" max="100" defaultValue="42" aria-label="Zoom" />
        <ZoomStep type="button" aria-label="Zoom in"><Pic w={8} h={8} stroke="#222"><path d="M0 4h8M4 0v8" /></Pic></ZoomStep>
        <ZoomValue>85%</ZoomValue>
      </StatusBar>

      <Taskbar>
        <StartButton type="button" aria-label="Start"><WindowsLogo /></StartButton>
        <TaskSearch>
          <SearchIcon s={16} color="#222" />
          <PlainInput placeholder="Type here to search" aria-label="Type here to search" $size={14} $hint="#3a3a3a" />
        </TaskSearch>
        <TaskItem type="button" aria-label="Task view"><TaskViewIcon /></TaskItem>
        <TaskItem type="button" aria-label="File Explorer"><ExplorerIcon /></TaskItem>
        <TaskItem type="button" aria-label="Outlook" $open><OutlookIcon /></TaskItem>
        <TaskItem type="button" $open><ZoomLogo>zm</ZoomLogo></TaskItem>
        <TaskItem type="button" aria-label="Excel" $active><ExcelLogo s={23} /></TaskItem>
        {chromeBadges.map((badge) => (
          <TaskItem key={badge.ink} type="button" aria-label="Chrome" $open><ChromeIcon badge={badge} /></TaskItem>
        ))}
        <TaskItem type="button" aria-label="Teams" $open><TeamsIcon /></TaskItem>
        <TaskItem type="button" aria-label="Calculator"><CalcIcon /></TaskItem>
        <TaskItem type="button" aria-label="Studio" $open><HexIcon /></TaskItem>
        <Tray>
          <Pic w={12} h={8} stroke="#fff"><path d="M0 7l6-6 6 6" /></Pic>
          <Pic w={16} h={14} stroke="#fff"><path d="M5 1.500h10.400v8H3.500V6M.6.6h4v4h-4zM2.600 4.600v2M9 9.500v3M6 13h7" /></Pic>
          <Pic w={15} h={12} stroke="#fff"><path d="M.6 4v4h2l3.500 3V1L2.600 4zM9 3.500l5 5M14 3.500l-5 5" /></Pic>
          <Clock>12:52 PM<br />7/16/2025</Clock>
          <Notify type="button" aria-label="Notifications">
            <Svg width="16" height="16" viewBox="0 0 16 16" aria-hidden="true">
              <path d="M0 0h16v13H6l-3 3v-3H0z" fill="#fff" />
              <path d="M3 3.500h10M3 6.500h10M3 9.500h7" stroke="#1d1d1d" />
            </Svg>
            <Badge>22</Badge>
          </Notify>
        </Tray>
        <ShowDesktop type="button" aria-label="Show desktop" />
      </Taskbar>
    </Window>
  );
}
